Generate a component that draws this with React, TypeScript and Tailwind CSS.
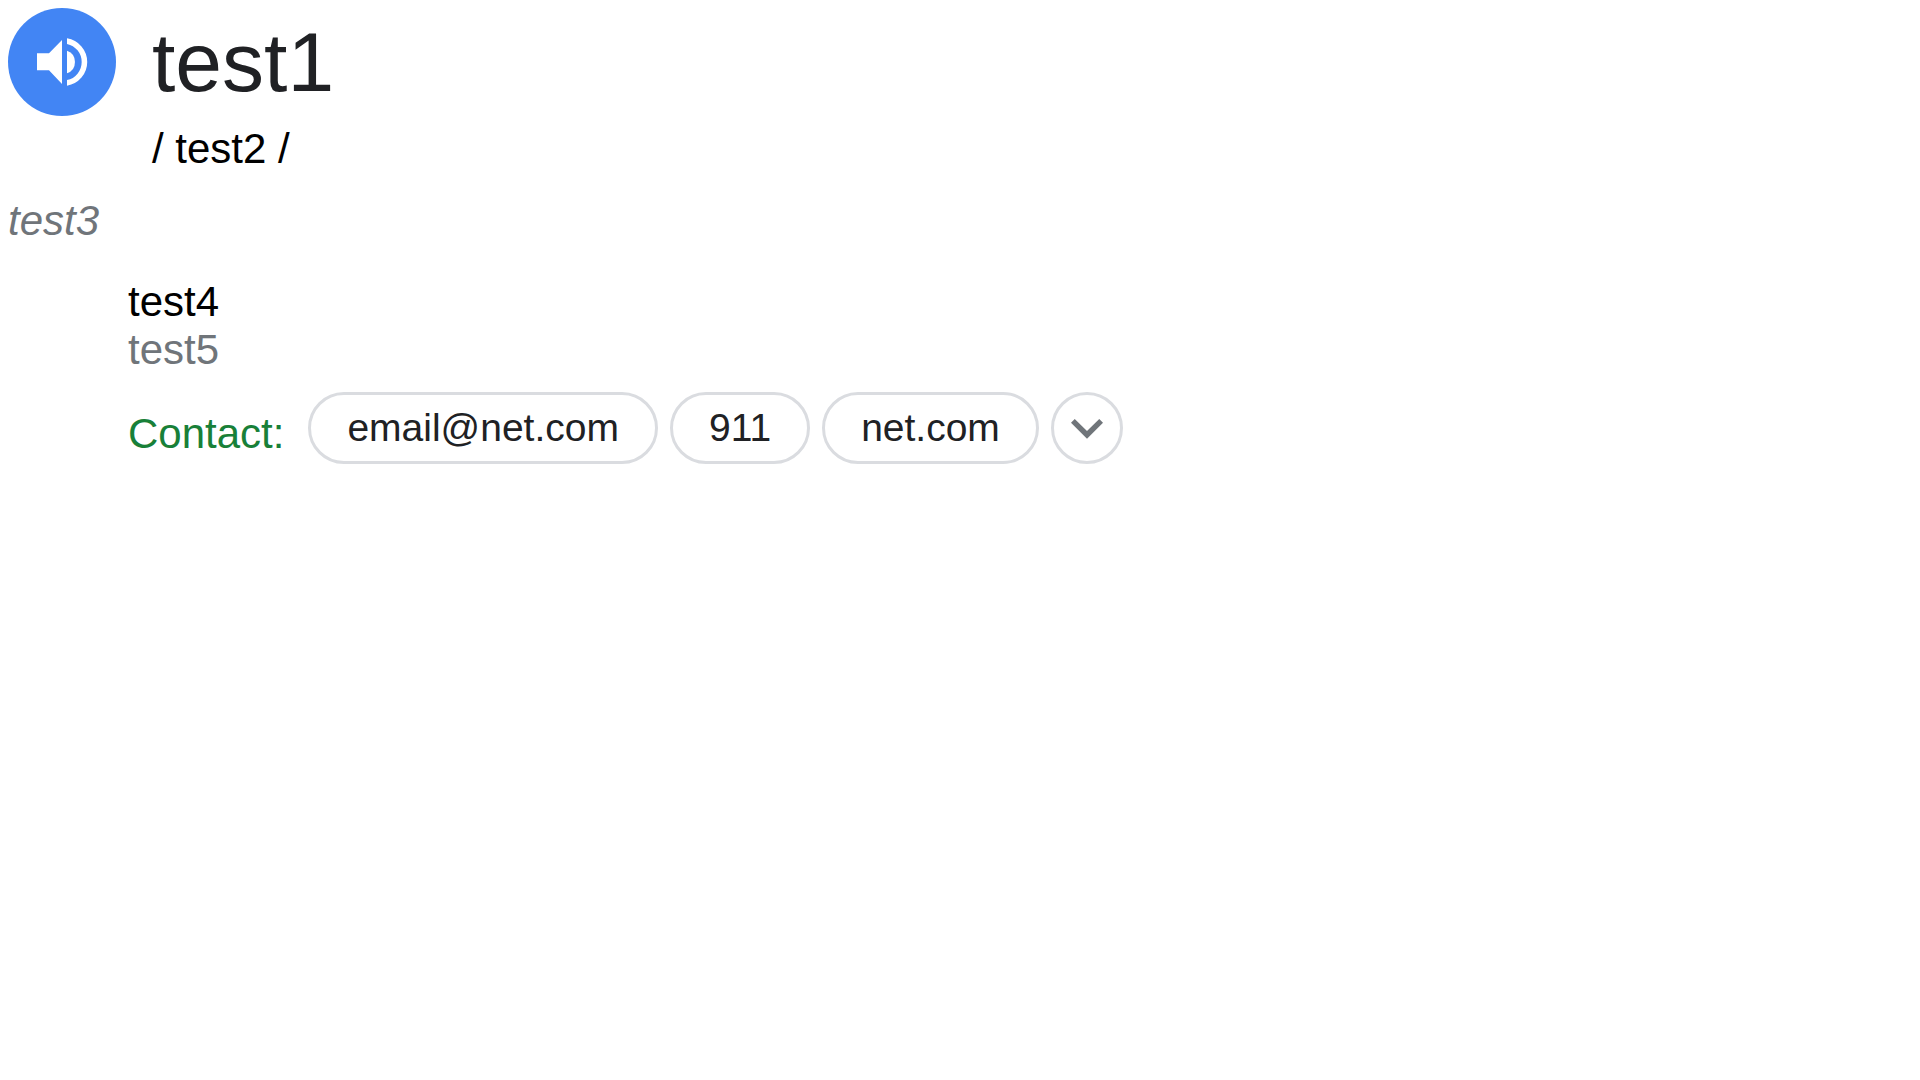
const contacts = ["email@net.com", "911", "net.com"];

function SpeakerIcon() {
  return (
    <svg viewBox="0 0 108 108" className="size-full" fill="#fff" aria-hidden="true">
      <path d="M29 45.3V62.3H41L54 76V32L41 45.3Z" />
      <path d="M59 42.7A12 12 0 0 1 59 65.3Z" />
      <path d="M59 30.3A24 24 0 0 1 59 77.7V72.1A18.5 18.5 0 0 0 59 35.9Z" />
    </svg>
  );
}

function ChevronIcon() {
  return (
    <svg viewBox="0 0 24 24" className="size-16 shrink-0" fill="#70757a" aria-hidden="true">
      <path d="M16.59 8.59 12 13.17 7.41 8.59 6 10l6 6 6-6z" />
    </svg>
  );
}

export default function App() {
  return (
    <main className="p-2 font-['Liberation_Sans',Arial,sans-serif] text-[42px] leading-[48px] text-black">
      <header className="flex items-center gap-9">
        <button
          type="button"
          aria-label="Listen"
          className="size-[108px] shrink-0 rounded-full bg-[#4285f4]"
        >
          <SpeakerIcon />
        </button>
        <h1 className="text-[84px] leading-[96px] text-[#202124]">test1</h1>
      </header>
      <p className="mt-[9px] ml-36">/ test2 /</p>
      <p className="mt-6 text-[#70757a] italic">test3</p>
      <section className="mt-[33px] ml-[120px]">
        <p>test4</p>
        <p className="text-[#70757a]">test5</p>
        <div className="mt-[18px] flex flex-wrap items-center gap-3">
          <span className="pt-3 pr-3 text-[#188038]">Contact:</span>
          {contacts.map((label) => (
            <button
              key={label}
              type="button"
              className="h-[72px] rounded-full border-3 border-[#dadce0] px-9 text-[39px] text-[#202124]"
            >
              {label}
            </button>
          ))}
          <button
            type="button"
            aria-label="Show more"
            className="flex size-[72px] items-center justify-center rounded-full border-3 border-[#dadce0]"
          >
            <ChevronIcon />
          </button>
        </div>
      </section>
    </main>
  );
}
